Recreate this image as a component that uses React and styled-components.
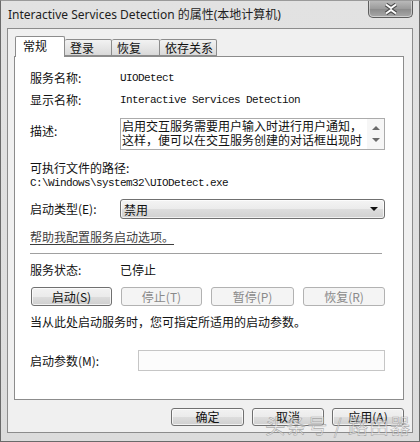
import React from "react";
import styled, { createGlobalStyle } from "styled-components";

const GlobalStyle = createGlobalStyle`
  body {
    margin: 0;
    background: #ffffff;
  }
`;

const cjk = `"Noto Sans CJK SC", "Noto Sans", sans-serif`;
const mono = `"Liberation Mono", "DejaVu Sans Mono", monospace`;

function App() {
  return (
    <>
      <GlobalStyle />
      <Window>
        <TitleBar>
          <Title>Interactive Services Detection 的属性(本地计算机)</Title>
          <CloseButton>
            <svg width="16" height="12" viewBox="0 0 16 12">
              <path
                d="M3 1.5 L8 5 L13 1.5 M3 10.5 L8 7 L13 10.5"
                stroke="#4a4a4a"
                strokeWidth="4"
                fill="none"
              />
              <path
                d="M3 1.5 L8 5 L13 1.5 M3 10.5 L8 7 L13 10.5"
                stroke="#ffffff"
                strokeWidth="2"
                fill="none"
              />
            </svg>
          </CloseButton>
        </TitleBar>

        <Client>
          <Tabs>
            <Tab $active $width={50}>常规</Tab>
            <Tab $width={47}>登录</Tab>
            <Tab $width={48}>恢复</Tab>
            <Tab $width={57}>依存关系</Tab>
          </Tabs>

          <TabPage>
            <Row $top={13}>
              <Label>服务名称:</Label>
              <Mono>UIODetect</Mono>
            </Row>
            <Row $top={6}>
              <Label>显示名称:</Label>
              <Mono>Interactive Services Detection</Mono>
            </Row>
            <Row $top={10} $align="flex-start">
              <Label $offset={5}>描述:</Label>
              <DescBox>
                <DescText>
                  启用交互服务需要用户输入时进行用户通知，
                  <br />
                  这样，便可以在交互服务创建的对话框出现时
                </DescText>
                <ScrollBar>
                  <Arrow $up />
                  <Arrow />
                </ScrollBar>
              </DescBox>
            </Row>
            <TextLine $top={11}>可执行文件的路径:</TextLine>
            <PathLine>C:\Windows\system32\UIODetect.exe</PathLine>
            <Row $top={9}>
              <Label>启动类型(E):</Label>
              <Select>
                <span>禁用</span>
                <Caret />
              </Select>
            </Row>
            <HelpLink $top={10}>帮助我配置服务启动选项。</HelpLink>
            <Separator />
            <Row $top={8}>
              <Label>服务状态:</Label>
              <Value>已停止</Value>
            </Row>
            <ButtonRow>
              <Button>启动(S)</Button>
              <Button disabled>停止(T)</Button>
              <Button disabled $width={83}>暂停(P)</Button>
              <Button disabled $width={82}>恢复(R)</Button>
            </ButtonRow>
            <TextLine $top={9}>当从此处启动服务时，您可指定所适用的启动参数。</TextLine>
            <Row $top={21}>
              <Label $width={108}>启动参数(M):</Label>
              <ParamInput />
            </Row>
          </TabPage>

          <Footer>
            <Button $width={73} $height={18}>确定</Button>
            <Button $width={72} $height={18}>取消</Button>
            <Button $width={72} $height={18}>应用(A)</Button>
          </Footer>
        </Client>

        <Watermark>头条号 / 路由器</Watermark>
      </Window>
    </>
  );
}

export default App;

const Window = styled.div`
  position: relative;
  width: 420px;
  height: 442px;
  box-sizing: border-box;
  background: linear-gradient(#e2e2e2, #dcdcdc);
  border: 1px solid #6a6a6a;
  border-top-color: #9a9a9a;
  display: flex;
  flex-direction: column;
  overflow: hidden;
`;

const TitleBar = styled.div`
  height: 27px;
  display: flex;
  justify-content: space-between;
  align-items: flex-start;
`;

const Title = styled.div`
  margin: 6px 0 0 7px;
  font-family: "Noto Sans", ${cjk};
  font-size: 12px;
  line-height: 16px;
  color: #1e1e1e;
  white-space: nowrap;
`;

const CloseButton = styled.div`
  width: 45px;
  height: 18px;
  margin: -1px 6px 0 0;
  box-sizing: border-box;
  border: 1px solid #5e5e5e;
  border-top: none;
  border-radius: 0 0 5px 5px;
  background: linear-gradient(#bdbdbd, #9c9c9c 50%, #8a8a8a 51%, #a8a8a8);
  box-shadow: inset 0 0 0 1px rgba(255, 255, 255, 0.45);
  display: flex;
  align-items: center;
  justify-content: center;
`;

const Client = styled.div`
  flex: 1;
  margin: 0 6px 8px 6px;
  box-sizing: border-box;
  border: 1px solid #8c8c8c;
  background: #f0f0f0;
  padding: 7px 8px 0 6px;
  display: flex;
  flex-direction: column;
`;

const Tabs = styled.div`
  display: flex;
  align-items: flex-end;
  height: 20px;
  padding-left: 1px;
  position: relative;
  z-index: 1;
`;

const Tab = styled.div`
  width: ${(p) => p.$width}px;
  height: ${(p) => (p.$active ? 21 : 17)}px;
  margin-bottom: ${(p) => (p.$active ? -1 : 0)}px;
  box-sizing: border-box;
  border: 1px solid #8c8c8c;
  border-bottom: ${(p) => (p.$active ? "none" : "1px solid #8c8c8c")};
  border-left: ${(p) => (p.$active ? "1px solid #8c8c8c" : "none")};
  background: ${(p) =>
    p.$active ? "#ffffff" : "linear-gradient(#f2f2f2, #e6e6e6 50%, #d9d9d9)"};
  border-radius: 2px 2px 0 0;
  font-family: ${cjk};
  font-size: 12px;
  line-height: ${(p) => (p.$active ? 18 : 15)}px;
  padding-left: ${(p) => (p.$active ? 7 : 5)}px;
  color: #111;
`;

const TabPage = styled.div`
  width: 390px;
  height: 344px;
  box-sizing: border-box;
  background: #ffffff;
  border: 1px solid #8c8c8c;
  padding: 0 18px 0 15px;
  display: flex;
  flex-direction: column;
`;

const Row = styled.div`
  display: flex;
  align-items: ${(p) => p.$align || "center"};
  margin-top: ${(p) => p.$top}px;
  min-height: 16px;
`;

const Label = styled.div`
  width: ${(p) => p.$width || 90}px;
  flex-shrink: 0;
  margin-top: ${(p) => p.$offset || 0}px;
  font-family: ${cjk};
  font-size: 12px;
  line-height: 16px;
  color: #111;
  white-space: nowrap;
`;

const Value = styled.div`
  font-family: ${cjk};
  font-size: 12px;
  line-height: 16px;
  color: #111;
`;

const Mono = styled.div`
  font-family: ${mono};
  font-size: 11px;
  letter-spacing: -0.6px;
  line-height: 16px;
  color: #111;
  white-space: nowrap;
`;

const DescBox = styled.div`
  width: 266px;
  height: 32px;
  box-sizing: border-box;
  border: 1px solid #ababab;
  display: flex;
  background: #fff;
`;

const DescText = styled.div`
  flex: 1;
  padding: 0 0 0 1px;
  font-family: ${cjk};
  font-size: 12px;
  line-height: 14px;
  color: #111;
  white-space: nowrap;
  overflow: hidden;
`;

const ScrollBar = styled.div`
  width: 17px;
  background: #f6f6f6;
  display: flex;
  flex-direction: column;
  justify-content: space-around;
  align-items: center;
  padding: 3px 0;
`;

const Arrow = styled.div`
  width: 0;
  height: 0;
  border-left: 4px solid transparent;
  border-right: 4px solid transparent;
  ${(p) =>
    p.$up
      ? "border-bottom: 4px solid #6a6a6a;"
      : "border-top: 4px solid #6a6a6a;"}
`;

const TextLine = styled.div`
  margin-top: ${(p) => p.$top}px;
  font-family: ${cjk};
  font-size: 12px;
  line-height: 14px;
  color: #111;
  white-space: nowrap;
`;

const PathLine = styled.div`
  margin-top: 1px;
  font-family: ${mono};
  font-size: 11px;
  letter-spacing: -0.6px;
  line-height: 14px;
  color: #111;
`;

const Select = styled.div`
  width: 266px;
  height: 20px;
  box-sizing: border-box;
  border: 1px solid #707070;
  border-radius: 3px;
  background: linear-gradient(#f4f4f4, #ebebeb 50%, #dddddd 51%, #d0d0d0);
  box-shadow: inset 0 0 0 1px rgba(255, 255, 255, 0.7);
  display: flex;
  align-items: center;
  justify-content: space-between;
  padding: 0 6px 0 3px;
  font-family: ${cjk};
  font-size: 12px;
  color: #111;
`;

const Caret = styled.div`
  width: 0;
  height: 0;
  border-left: 4px solid transparent;
  border-right: 4px solid transparent;
  border-top: 4px solid #111;
`;

const HelpLink = styled.div`
  margin-top: ${(p) => p.$top}px;
  font-family: ${cjk};
  font-size: 12px;
  line-height: 16px;
  color: #3e3e3e;
  text-decoration: underline;
  text-underline-offset: 2px;
`;

const Separator = styled.div`
  margin: 8px 3px 0 0;
  height: 1px;
  background: #a0a0a0;
`;

const ButtonRow = styled.div`
  display: flex;
  gap: 9px;
  margin-top: 9px;
  padding-left: 1px;
`;

const Button = styled.button`
  width: ${(p) => p.$width || 81}px;
  height: ${(p) => p.$height || 19}px;
  box-sizing: border-box;
  padding: 0;
  border: 1px solid ${(p) => (p.disabled ? "#b2b2b2" : "#707070")};
  border-radius: 3px;
  background: ${(p) =>
    p.disabled
      ? "#f4f4f4"
      : "linear-gradient(#f2f2f2, #ebebeb 50%, #dddddd 51%, #cfcfcf)"};
  box-shadow: inset 0 0 0 1px
    ${(p) => (p.disabled ? "transparent" : "rgba(255,255,255,0.7)")};
  font-family: ${cjk};
  font-size: 12px;
  line-height: 16px;
  color: ${(p) => (p.disabled ? "#8a8a8a" : "#111")};
`;

const ParamInput = styled.div`
  width: 248px;
  height: 21px;
  box-sizing: border-box;
  border: 1px solid #c6c6c6;
  background: #fcfcfc;
`;

const Footer = styled.div`
  display: flex;
  justify-content: flex-end;
  gap: 8px;
  margin-top: 8px;
`;

const Watermark = styled.div`
  position: absolute;
  right: 8px;
  bottom: 1px;
  font-family: ${cjk};
  font-size: 20px;
  letter-spacing: 1px;
  color: rgba(255, 255, 255, 0.55);
  -webkit-text-stroke: 0.6px rgba(120, 120, 120, 0.6);
  white-space: nowrap;
  pointer-events: none;
`;
